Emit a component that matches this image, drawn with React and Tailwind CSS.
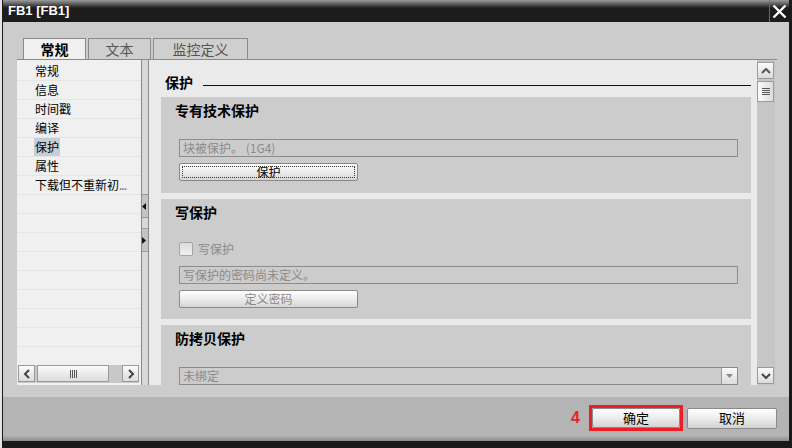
import React from "react";

const CJK = { fontFamily: '"Noto Sans CJK SC", "Noto Sans", sans-serif' };

const navItems = ["常规", "信息", "时间戳", "编译", "保护", "属性", "下载但不重新初"];

const Btn = ({ children, w, disabled, focus }) => (
  <div
    className={`h-[18px] ${w} flex items-center justify-center border border-[#8a8a8a] rounded-[2px] bg-[linear-gradient(#ffffff,#ececec_50%,#d6d6d6)] text-[12px] leading-none ${disabled ? "text-[#8a8a8a]" : "text-black"}`}
  >
    {focus ? (
      <div className="w-[calc(100%-4px)] h-[12px] border border-dotted border-[#333] flex items-center justify-center">{children}</div>
    ) : (
      children
    )}
  </div>
);

const Field = ({ children }) => (
  <div className="w-[559px] h-[18px] border border-[#8c8c8c] bg-[#cccccc] pl-[3px] flex items-center text-[12px] leading-none text-[#8a8a8a]">
    {children}
  </div>
);

const ScrollBtn = ({ children, className = "" }) => (
  <div className={`w-[17px] h-[17px] border border-[#9a9a9a] bg-[linear-gradient(#fafafa,#dcdcdc)] flex items-center justify-center ${className}`}>
    {children}
  </div>
);

const Section = ({ title, className, children }) => (
  <div className={`bg-[#cccccc] pl-[18px] pt-[5px] ${className}`}>
    <div className="text-[14px] leading-[16px] font-bold text-black -ml-[4px]">{title}</div>
    {children}
  </div>
);

export default function App() {
  return (
    <div className="w-[792px] h-[448px] bg-[#e4e4e4] pl-[2px] overflow-hidden" style={CJK}>
      <div className="h-full flex flex-col border-l-[1px] border-r-[3px] border-[#1a1a1a] bg-[#cccccc]">
        {/* title bar */}
        <div className="h-[22px] flex items-center bg-[linear-gradient(#9c9c9c,#1c1c1c_8px)] relative">
          <span className="ml-[5px] text-white text-[13px] font-bold" style={{ fontFamily: '"Liberation Sans", sans-serif' }}>
            FB1 [FB1]
          </span>
          <div className="ml-auto h-full w-[20px] border-l border-[#6a6a6a] flex items-center justify-center">
            <svg width="15" height="15" viewBox="0 0 15 15">
              <path d="M1.5 1.5 L13.5 13.5 M13.5 1.5 L1.5 13.5" stroke="#fff" strokeWidth="2.4" />
            </svg>
          </div>
        </div>

        {/* body */}
        <div className="h-[375px] pl-[14px] pr-[12px] pt-[16px]">
          {/* tabs */}
          <div className="h-[22px] flex items-end gap-[2px] pl-[6px] border-b border-[#8a8a8a]">
            <div className="w-[63px] h-[21px] bg-[#f0f0f0] border border-b-0 border-[#8a8a8a] flex items-center justify-center text-[14px] font-bold text-black">
              常规
            </div>
            <div className="w-[63px] h-[21px] bg-[#cfcfcf] border border-b-0 border-[#8a8a8a] flex items-center justify-center text-[14px] text-[#555]">
              文本
            </div>
            <div className="w-[95px] h-[21px] bg-[#cfcfcf] border border-b-0 border-[#8a8a8a] flex items-center justify-center text-[14px] text-[#555]">
              监控定义
            </div>
          </div>

          {/* panels */}
          <div className="h-[325px] flex">
            {/* left nav */}
            <div className="w-[124px] bg-[#f0f0f0] flex flex-col">
              <div className="flex-1 overflow-hidden pt-[2px]">
                {navItems.map((t, i) => (
                  <div key={i} className="h-[19px] border-b border-[#e4e4e4] pl-[17px] flex items-center text-[12px] text-black">
                    <span className={`h-[18px] px-[1px] flex items-center ${t === "保护" ? "bg-[#c5ced8]" : ""}`}>
                      {t}
                      {i === 6 && <span className="text-[#6a6aa8] tracking-[-1px]">...</span>}
                    </span>
                  </div>
                ))}
                {Array.from({ length: 10 }).map((_, i) => (
                  <div key={"e" + i} className="h-[19px] border-b border-[#e4e4e4]" />
                ))}
              </div>
              <div className="h-[20px] pl-[1px] pr-[2px] pb-[2px] flex bg-[#f0f0f0]">
                <div className="flex-1 flex bg-[#c8c8c8]">
                  <ScrollBtn>
                    <svg width="8" height="10" viewBox="0 0 8 10"><path d="M6 1 L2 5 L6 9" stroke="#444" strokeWidth="2" fill="none" /></svg>
                  </ScrollBtn>
                  <div className="ml-[2px] w-[72px] h-[17px] border border-[#9a9a9a] bg-[linear-gradient(#fafafa,#dcdcdc)] flex items-center justify-center gap-[1px]">
                    {[0, 1, 2, 3].map((k) => (
                      <div key={k} className="w-[1px] h-[8px] bg-[#555]" />
                    ))}
                  </div>
                  <ScrollBtn className="ml-auto">
                    <svg width="8" height="10" viewBox="0 0 8 10"><path d="M2 1 L6 5 L2 9" stroke="#444" strokeWidth="2" fill="none" /></svg>
                  </ScrollBtn>
                </div>
              </div>
            </div>

            {/* splitter */}
            <div className="w-[8px] border-x border-[#8a8a8a] bg-[#d8d8d8] flex flex-col">
              <div className="mt-[134px] h-[24px] border-y border-[#9a9a9a] bg-[#c4c4c4] flex items-center">
                <svg width="5" height="7" viewBox="0 0 5 7"><path d="M4 0 L0 3.5 L4 7 Z" fill="#111" /></svg>
              </div>
              <div className="mt-[10px] h-[24px] border-y border-[#9a9a9a] bg-[#c4c4c4] flex items-center">
                <svg width="5" height="7" viewBox="0 0 5 7"><path d="M0 0 L4 3.5 L0 7 Z" fill="#111" /></svg>
              </div>
            </div>

            {/* right content */}
            <div className="flex-1 flex bg-[#eaeaea]">
              <div className="flex-1 overflow-hidden pl-[12px] pr-[6px]">
                <div className="h-[37px] flex items-end pb-[7px] pl-[4px]">
                  <span className="text-[14px] leading-[16px] font-bold text-black">保护</span>
                  <div className="flex-1 ml-[10px] mb-[4px] h-[1px] bg-[#111]" />
                </div>

                <Section title="专有技术保护" className="h-[96px]">
                  <div className="mt-[21px]">
                    <Field>块被保护。 (1G4)</Field>
                  </div>
                  <div className="mt-[6px]">
                    <Btn w="w-[179px]" focus>保护</Btn>
                  </div>
                </Section>

                <Section title="写保护" className="h-[120px] mt-[6px]">
                  <div className="mt-[22px] h-[14px] flex items-center gap-[5px]">
                    <div className="w-[14px] h-[14px] border border-[#a4a4a4] rounded-[2px] bg-[linear-gradient(#dadada,#f2f2f2)]" />
                    <span className="text-[12px] text-[#8a8a8a]">写保护</span>
                  </div>
                  <div className="mt-[10px]">
                    <Field>写保护的密码尚未定义。</Field>
                  </div>
                  <div className="mt-[6px]">
                    <Btn w="w-[179px]" disabled>定义密码</Btn>
                  </div>
                </Section>

                <Section title="防拷贝保护" className="h-[80px] mt-[6px]">
                  <div className="mt-[21px] w-[559px] h-[18px] border border-[#8c8c8c] bg-[#cccccc] flex items-center">
                    <span className="flex-1 pl-[3px] text-[12px] leading-none text-[#8a8a8a]">未绑定</span>
                    <div className="w-[16px] h-full border-l border-[#9a9a9a] bg-[linear-gradient(#fafafa,#dcdcdc)] flex items-center justify-center">
                      <svg width="7" height="4" viewBox="0 0 7 4"><path d="M0 0 L7 0 L3.5 4 Z" fill="#888" /></svg>
                    </div>
                  </div>
                </Section>
              </div>

              {/* vertical scrollbar */}
              <div className="w-[20px] bg-[#cccccc] flex">
                <div className="w-[18px] bg-[#c6c6c6] flex flex-col pt-[2px] pb-[1px]">
                  <ScrollBtn>
                    <svg width="10" height="6" viewBox="0 0 10 6"><path d="M1 5 L5 1 L9 5" stroke="#555" strokeWidth="2" fill="none" /></svg>
                  </ScrollBtn>
                  <div className="mt-[2px] w-[17px] h-[21px] border border-[#9a9a9a] bg-[linear-gradient(90deg,#fafafa,#dcdcdc)] flex flex-col items-center justify-center gap-[1px]">
                    {[0, 1, 2, 3].map((k) => (
                      <div key={k} className="w-[8px] h-[1px] bg-[#555]" />
                    ))}
                  </div>
                  <ScrollBtn className="mt-auto">
                    <svg width="10" height="6" viewBox="0 0 10 6"><path d="M1 1 L5 5 L9 1" stroke="#444" strokeWidth="2" fill="none" /></svg>
                  </ScrollBtn>
                </div>
              </div>
            </div>
          </div>
        </div>

        {/* footer */}
        <div className="h-[44px] bg-[linear-gradient(#b4b4b4,#b4b4b4_88%,#8a8a8a)] flex items-center justify-end pr-[12px] pb-[2px]">
          <span className="text-[16px] font-bold text-[#e02626] mr-[9px]" style={{ fontFamily: '"Liberation Sans", sans-serif' }}>
            4
          </span>
          <div className="w-[94px] h-[26px] border-[3px] border-[#ee1c24] flex">
            <div className="flex-1 border border-[#8a8a8a] rounded-[2px] bg-[linear-gradient(#ffffff,#ececec_50%,#d2d2d2)] flex items-center justify-center text-[13px] text-black">
              确定
            </div>
          </div>
          <div className="ml-[4px] w-[90px] h-[21px] border border-[#8a8a8a] rounded-[2px] bg-[linear-gradient(#ffffff,#ececec_50%,#d2d2d2)] flex items-center justify-center text-[13px] text-black">
            取消
          </div>
        </div>
        <div className="flex-1 bg-[#1a1a1a]" />
      </div>
    </div>
  );
}
